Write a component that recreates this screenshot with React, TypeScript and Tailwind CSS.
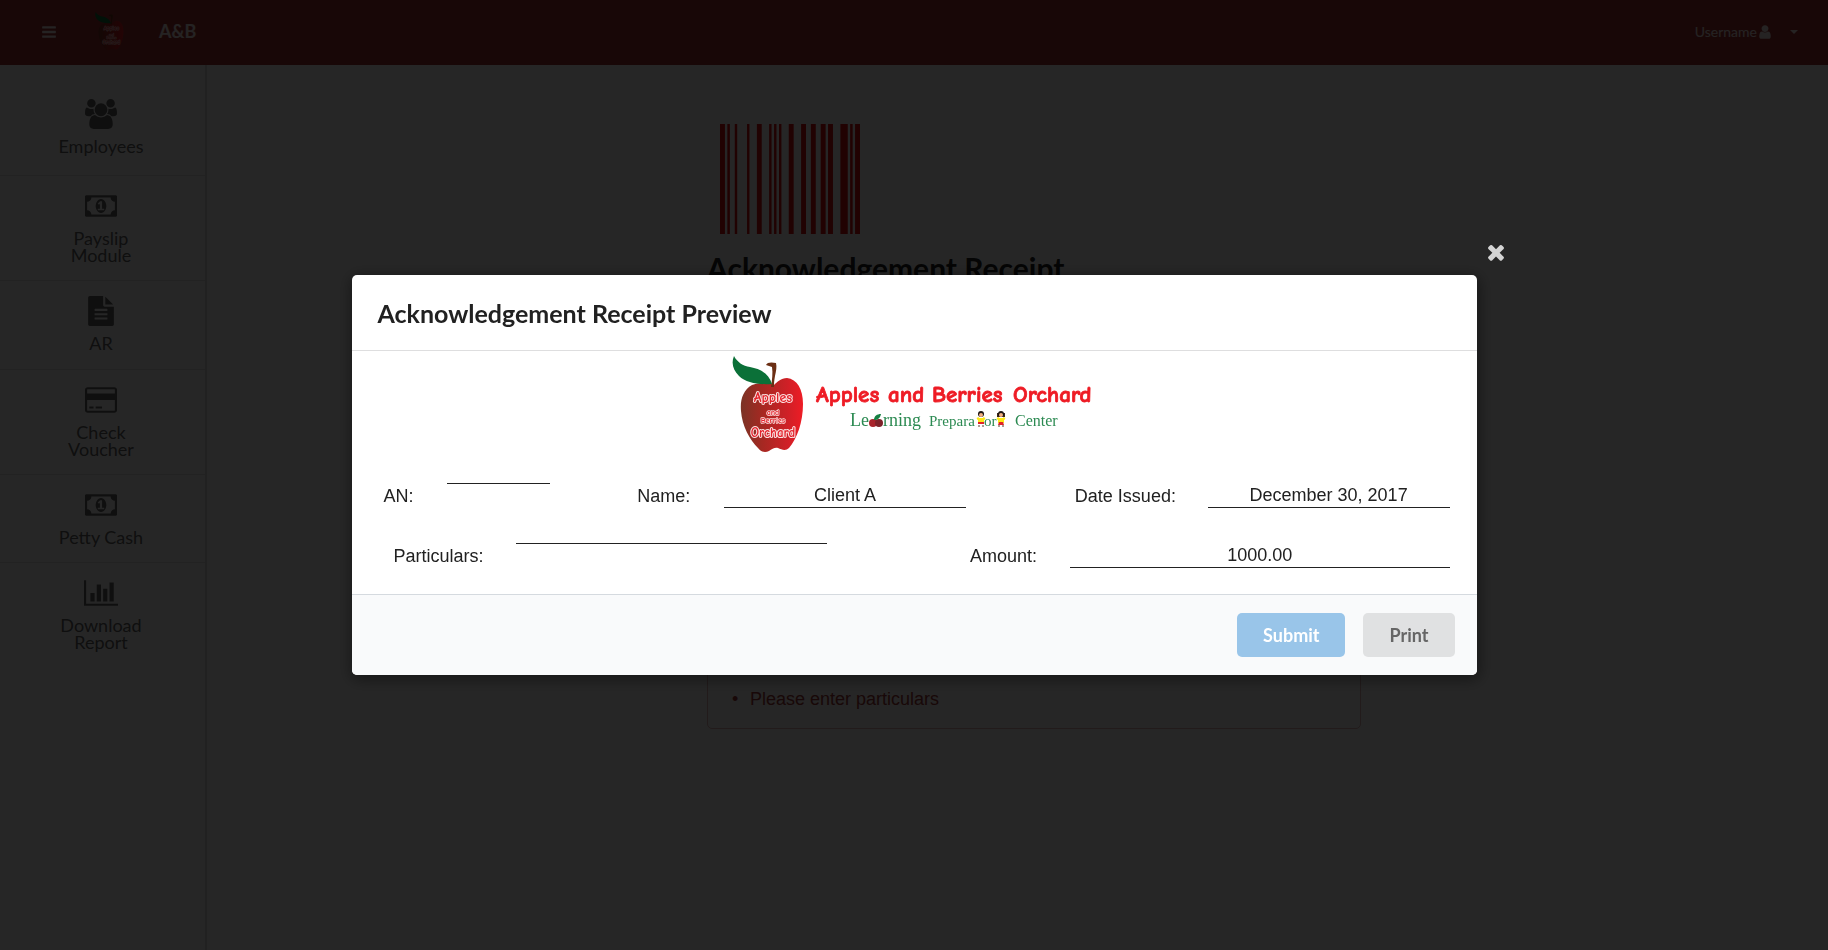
import type { ReactNode } from 'react';

const ICONS = {
  users: {
    box: '0 0 1920 1792',
    d: 'M593 896q-162 5-265 128h-134q-82 0-138-40.5t-56-118.5q0-353 124-353 6 0 43.5 21t97.5 42.5 119 21.5q67 0 133-23-5 37-5 66 0 139 81 256zm1071 637q0 120-73 189.5t-194 69.5h-874q-121 0-194-69.5t-73-189.5q0-53 3.5-103.5t14-109 26.5-108.5 43-97.5 62-81 85.5-53.5 111.5-20q10 0 43 21.5t73 48 107 48 135 21.5 135-21.5 107-48 73-48 43-21.5q61 0 111.5 20t85.5 53.5 62 81 43 97.5 26.5 108.5 14 109 3.5 103.5zm-1024-1277q0 106-75 181t-181 75-181-75-75-181 75-181 181-75 181 75 75 181zm704 384q0 159-112.5 271.5t-271.5 112.5-271.5-112.5-112.5-271.5 112.5-271.5 271.5-112.5 271.5 112.5 112.5 271.5zm576 225q0 78-56 118.5t-138 40.5h-134q-103-123-265-128 81-117 81-256 0-29-5-66 66 23 133 23 59 0 119-21.5t97.5-42.5 43.5-21q124 0 124 353zm-128-609q0 106-75 181t-181 75-181-75-75-181 75-181 181-75 181 75 75 181z',
  },
  money: {
    box: '0 0 1920 1792',
    d: 'M768 1152h384v-96h-128v-448h-114l-148 137 77 80q42-37 55-57h2v288h-128v96zm512-256q0 70-21 142t-59.5 134-101.5 101-138 39-138-39-101.5-101-59.5-134-21-142 21-142 59.5-134 101.5-101 138-39 138 39 101.5 101 59.5 134 21 142zm512 256v-512q-106 0-181-75t-75-181h-1152q0 106-75 181t-181 75v512q106 0 181 75t75 181h1152q0-106 75-181t181-75zm128-832v1152q0 26-19 45t-45 19h-1792q-26 0-45-19t-19-45v-1152q0-26 19-45t45-19h1792q26 0 45 19t19 45z',
  },
  file: {
    box: '0 0 1792 1792',
    d: 'M1596 476q14 14 28 36h-472v-472q22 14 36 28zm-476 164h544v1056q0 40-28 68t-68 28h-1344q-40 0-68-28t-28-68v-1600q0-40 28-68t68-28h800v544q0 40 28 68t68 28zm160 736v-64q0-14-9-23t-23-9h-704q-14 0-23 9t-9 23v64q0 14 9 23t23 9h704q14 0 23-9t9-23zm0-256v-64q0-14-9-23t-23-9h-704q-14 0-23 9t-9 23v64q0 14 9 23t23 9h704q14 0 23-9t9-23zm0-256v-64q0-14-9-23t-23-9h-704q-14 0-23 9t-9 23v64q0 14 9 23t23 9h704q14 0 23-9t9-23z',
  },
  card: {
    box: '0 0 1920 1792',
    d: 'M1760 128q66 0 113 47t47 113v1216q0 66-47 113t-113 47h-1600q-66 0-113-47t-47-113v-1216q0-66 47-113t113-47h1600zm-1600 128q-13 0-22.5 9.5t-9.5 22.5v224h1664v-224q0-13-9.5-22.5t-22.5-9.5h-1600zm1600 1280q13 0 22.5-9.5t9.5-22.5v-608h-1664v608q0 13 9.5 22.5t22.5 9.5h1600zm-1504-128v-128h256v128h-256zm384 0v-128h384v128h-384z',
  },
  chart: {
    box: '0 0 2048 1792',
    d: 'M640 896v512h-256v-512h256zm384-512v1024h-256v-1024h256zm1024 1152v128h-2048v-1536h128v1408h1920zm-640-896v768h-256v-768h256zm384-384v1152h-256v-1152h256z',
  },
  user: {
    box: '0 0 1792 1792',
    d: 'M1536 1399q0 109-62.5 187t-150.5 78h-854q-88 0-150.5-78t-62.5-187q0-85 8.5-160.5t31.5-152 58.5-131 94-89 134.5-34.5q131 128 313 128t313-128q76 0 134.5 34.5t94 89 58.5 131 31.5 152 8.5 160.5zm-256-887q0 159-112.5 271.5t-271.5 112.5-271.5-112.5-112.5-271.5 112.5-271.5 271.5-112.5 271.5 112.5 112.5 271.5z',
  },
  close: {
    box: '0 0 1792 1792',
    d: 'M1490 1322q0 40-28 68l-136 136q-28 28-68 28t-68-28l-294-294-294 294q-28 28-68 28t-68-28l-136-136q-28-28-28-68t28-68l294-294-294-294q-28-28-28-68t28-68l136-136q28-28 68-28t68 28l294 294 294-294q28-28 68-28t68 28l136 136q28 28 28 68t-28 68l-294 294 294 294q28 28 28 68z',
  },
  bars: {
    box: '0 0 1792 1792',
    d: 'M1664 1344v128q0 26-19 45t-45 19h-1408q-26 0-45-19t-19-45v-128q0-26 19-45t45-19h1408q26 0 45 19t19 45zm0-512v128q0 26-19 45t-45 19h-1408q-26 0-45-19t-19-45v-128q0-26 19-45t45-19h1408q26 0 45 19t19 45zm0-512v128q0 26-19 45t-45 19h-1408q-26 0-45-19t-19-45v-128q0-26 19-45t45-19h1408q26 0 45 19t19 45z',
  },
};

type IconName = keyof typeof ICONS;

function Icon({ name, className }: { name: IconName; className: string }) {
  return (
    <svg viewBox={ICONS[name].box} className={className} fill="currentColor" aria-hidden="true">
      <path d={ICONS[name].d} />
    </svg>
  );
}

/* Bars of the barcode: [start, width] on a 1792-unit grid */
const BARCODE = [
  [0, 63], [94, 32], [189, 31], [346, 31], [472, 62], [629, 31], [692, 31], [755, 31],
  [880, 63], [1038, 63], [1163, 63], [1289, 63], [1383, 63], [1541, 94], [1666, 32], [1729, 63],
];

function Barcode() {
  return (
    <svg viewBox="0 0 1792 1408" className="ml-[13px] h-[110px] w-[140px] text-[#db0f0f]" fill="currentColor" aria-hidden="true">
      {BARCODE.map(([x, w]) => (
        <rect key={x} x={x} y="0" width={w} height="1408" />
      ))}
    </svg>
  );
}

/* Apple drawn on a 75 x 100 grid */
function Apple({ id }: { id: string }) {
  return (
    <g>
      <defs>
        <linearGradient id={id} x1="0" x2="1" y1="0" y2="0">
          <stop offset="0" stopColor="#7a3325" />
          <stop offset="0.35" stopColor="#a62822" />
          <stop offset="0.75" stopColor="#cf2027" />
          <stop offset="1" stopColor="#ee1c25" />
        </linearGradient>
      </defs>
      <path
        d="M42 29C34 26 26 27 20 29C11 34 8 44 9 55C10 70 18 84 26 92C29 96 33 97 37 95C40 93 43 91 46 92C50 94 54 95 57 92C65 83 71 66 71 48C71 33 65 23 55 22C49 22 45 26 42 29Z"
        fill={`url(#${id})`}
      />
      <path d="M39 31C40 24 41 17 40 11L34 9C35 6 40 6 44 7C45 11 44 15 43 20C42 25 42 28 42 31Z" fill="#6b2f14" />
      <path d="M2 0C5 6 11 10 18 11C29 13 37 18 40 28C28 29 14 27 7 20C1 14 -1 7 2 0Z" fill="#0b7038" />
      <g
        fill="#e3222b"
        stroke="#fbe3e3"
        strokeWidth="2"
        paintOrder="stroke"
        strokeLinejoin="round"
        textAnchor="middle"
        fontFamily="'Comic Sans MS', 'Comic Neue', Lato, sans-serif"
        fontWeight="700"
      >
        <text x="41" y="46" fontSize="14">Apples</text>
        <text x="41" y="59" fontSize="8" strokeWidth="1.5">and</text>
        <text x="41" y="67" fontSize="8" strokeWidth="1.5">Berries</text>
        <text x="41" y="81" fontSize="13">Orchard</text>
      </g>
    </g>
  );
}

function Child({ x, skirt }: { x: number; skirt: boolean }) {
  return (
    <g transform={`translate(${x} 66)`}>
      {skirt && <path d="M-4 2h8v4h-8z" fill="#3a2418" />}
      <circle cx="0" cy="3" r="3" fill="#1d1512" />
      <circle cx="0" cy="4" r="2" fill="#f3b183" />
      <path d="M-3 7h6v5h-6z" fill="#fde716" />
      <path d="M-4 8l2-1M4 8l-2-1" stroke="#fde716" strokeWidth="2" />
      <path d={skirt ? 'M-3 14l1-3h4l1 3z' : 'M-3 11h6v2h-6z'} fill="#e0232a" />
      <path d="M-2 14v2M2 14v2" stroke="#5b3a2a" strokeWidth="1" />
    </g>
  );
}

function BrandBanner() {
  return (
    <svg viewBox="0 0 390 120" className="h-[120px] w-[390px]" role="img" aria-label="Apples and Berries Orchard Learning Preparatory Center">
      <g transform="translate(13 11)">
        <Apple id="bannerApple" />
      </g>
      <g
        fill="#ee1c25"
        stroke="#ee1c25"
        strokeWidth="0.8"
        fontFamily="'Comic Sans MS', 'Comic Neue', Lato, sans-serif"
        fontWeight="700"
        fontSize="23"
      >
        <text x="97" y="57">Apples</text>
        <text x="169" y="57">and</text>
        <text x="213" y="57">Berries</text>
        <text x="294" y="57">Orchard</text>
      </g>
      <g fill="#2c8a52" fontFamily="'Liberation Serif', serif">
        <text x="131" y="81" fontSize="18">Le</text>
        <text x="164" y="81" fontSize="18">rning</text>
        <text x="210" y="81" fontSize="15">Prepara</text>
        <text x="265" y="81" fontSize="15">or</text>
        <text x="296" y="81" fontSize="16">Center</text>
      </g>
      <circle cx="154" cy="78" r="4" fill="#a8242b" />
      <circle cx="160" cy="78" r="4" fill="#7d2229" />
      <path d="M155 75C155 71 158 69 162 69C161 73 159 75 155 75Z" fill="#158043" />
      <Child x={262} skirt={false} />
      <Child x={282} skirt />
    </svg>
  );
}

const NAV: { icon: IconName; label: string; iconClass: string; itemClass: string }[] = [
  { icon: 'users', label: 'Employees', iconClass: 'h-[30px] w-8', itemClass: 'pb-5 border-b' },
  { icon: 'money', label: 'Payslip Module', iconClass: 'h-[30px] w-8', itemClass: 'pb-4 border-b' },
  { icon: 'file', label: 'AR', iconClass: 'h-[30px] w-[30px]', itemClass: 'pb-[17px] border-b' },
  { icon: 'card', label: 'Check Voucher', iconClass: 'h-[30px] w-8', itemClass: 'pb-4 border-b' },
  { icon: 'money', label: 'Petty Cash', iconClass: 'h-[30px] w-8', itemClass: 'pb-4 border-b' },
  { icon: 'chart', label: 'Download Report', iconClass: 'h-[30px] w-[34px]', itemClass: 'pb-4' },
];

function TopBar() {
  return (
    <header className="flex h-[65px] items-center bg-[#a33333] pr-[30px] pb-[2px] pl-[41px] text-white/90">
      <button type="button" aria-label="Toggle menu">
        <Icon name="bars" className="h-4 w-4" />
      </button>
      <svg viewBox="0 0 75 100" className="ml-[38px] h-10 w-[30px]" aria-hidden="true">
        <Apple id="barApple" />
      </svg>
      <a href="#home" className="ml-[34px] text-[18px] font-bold">A&amp;B</a>
      <button type="button" className="ml-auto flex items-center text-sm">
        Username
        <Icon name="user" className="h-4 w-4" />
        <svg viewBox="0 0 8 4" className="ml-[17px] h-1 w-2" fill="currentColor" aria-hidden="true">
          <path d="M0 0h8L4 4z" />
        </svg>
      </button>
    </header>
  );
}

function SideNav() {
  return (
    <nav className="w-[207px] shrink-0 border-r-2 border-[#dadada] pt-[19px]">
      {NAV.map((item) => (
        <a
          key={item.label}
          href="#section"
          className={`flex flex-col items-center border-[#e4e4e4] pt-[15px] pr-[3px] text-[18px] leading-[17px] text-[#666666] ${item.itemClass}`}
        >
          <Icon name={item.icon} className={item.iconClass} />
          <span className="mt-[9px] w-[90px] text-center">{item.label}</span>
        </a>
      ))}
    </nav>
  );
}

function Label({ htmlFor, children }: { htmlFor: string; children: ReactNode }) {
  return (
    <label htmlFor={htmlFor} className="leading-[26px] whitespace-nowrap">
      {children}
    </label>
  );
}

function Value({ id, children }: { id: string; children?: ReactNode }) {
  return (
    <output id={id} className="block self-start border-b border-[#222222] text-center leading-6">
      {children}
    </output>
  );
}

function PreviewModal() {
  return (
    <section
      role="dialog"
      aria-modal="true"
      aria-labelledby="preview-title"
      className="relative w-[1125px] max-w-full rounded-[5px] bg-white text-[#212121] shadow-[1px_3px_15px_2px_rgba(0,0,0,0.4)]"
    >
      <button type="button" aria-label="Close" className="absolute -top-[35px] -right-[31px] text-[#d4d4d4]">
        <Icon name="close" className="h-6 w-6" />
      </button>
      <h2 id="preview-title" className="border-b border-[#dededf] px-[26px] pt-[22px] pb-[21px] text-[25px] leading-8 font-bold">
        Acknowledgement Receipt Preview
      </h2>
      <div className="flex flex-col pb-[25px] font-['Liberation_Sans',Arial,sans-serif] text-[18px]">
        <div className="-mt-1.5 flex justify-center">
          <BrandBanner />
        </div>
        <div className="mt-[18px] grid grid-cols-[64fr_103fr_87fr_87fr_242fr_109fr_133fr_242fr] pr-[27px] pl-8">
          <Label htmlFor="an">AN:</Label>
          <Value id="an" />
          <span />
          <Label htmlFor="name">Name:</Label>
          <Value id="name">Client A</Value>
          <span />
          <Label htmlFor="date">Date Issued:</Label>
          <Value id="date">December 30, 2017</Value>
        </div>
        <div className="mt-[34px] grid grid-cols-[123fr_311fr_143fr_100fr_380fr] pr-[27px] pl-[42px]">
          <Label htmlFor="particulars">Particulars:</Label>
          <Value id="particulars" />
          <span />
          <Label htmlFor="amount">Amount:</Label>
          <Value id="amount">1000.00</Value>
        </div>
      </div>
      <footer className="flex justify-end gap-[18px] rounded-b-[5px] border-t border-[#d5dadf] bg-[#f9fafb] px-[22px] py-[18px] text-[18px] font-bold">
        <button type="button" className="h-11 rounded-[5px] bg-[#99c5e9] px-[26px] text-white">Submit</button>
        <button type="button" className="h-11 rounded-[5px] bg-[#e0e1e2] px-[26px] text-[#666666]">Print</button>
      </footer>
    </section>
  );
}

export default function App() {
  return (
    <div className="flex min-h-screen flex-col bg-white font-['Lato',sans-serif]">
      <TopBar />
      <div className="flex flex-1">
        <SideNav />
        <main className="flex flex-1 justify-center pt-[59px] pl-[33px]">
          <div className="w-[654px]">
            <Barcode />
            <h1 className="mt-[14px] text-[30px] leading-[40px] font-bold text-[#212121]">Acknowledgement Receipt</h1>
            <div className="mt-[301px] rounded-[5px] border border-[#e0b4b4] bg-[#fffafa] px-6 pt-[97px] pb-[17px] font-['Liberation_Sans',Arial,sans-serif] text-[18px] leading-6 text-[#9f3a38]">
              <ul>
                <li className="before:inline-block before:w-[18px] before:content-['•']">Please enter particulars</li>
              </ul>
            </div>
          </div>
        </main>
      </div>
      <div className="fixed inset-0 flex items-center justify-center bg-black/85">
        <PreviewModal />
      </div>
    </div>
  );
}
